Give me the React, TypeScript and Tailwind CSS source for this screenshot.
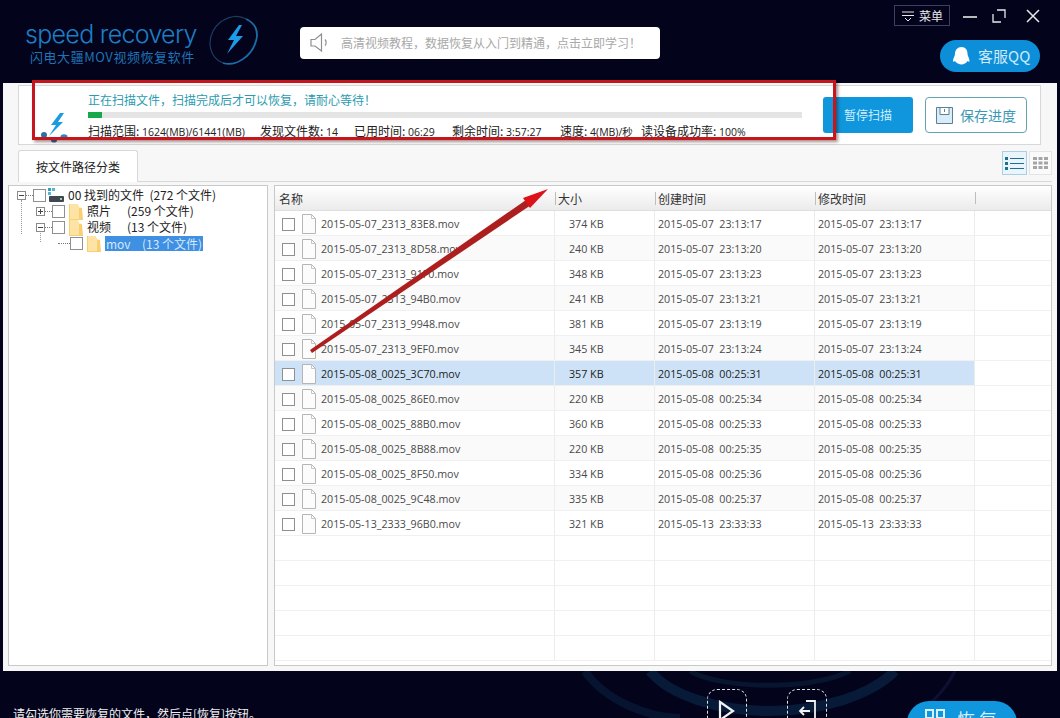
import { ReactNode } from "react"

const cjk = "font-['Noto_Sans_CJK_SC','Noto_Sans',sans-serif]"
const num = "font-['Open_Sans','Noto_Sans_CJK_SC',sans-serif]"

const files = [
  { name: "2015-05-07_2313_83E8.mov", size: "374 KB", time: "2015-05-07  23:13:17", mod: "2015-05-07  23:13:17" },
  { name: "2015-05-07_2313_8D58.mov", size: "240 KB", time: "2015-05-07  23:13:20", mod: "2015-05-07  23:13:20" },
  { name: "2015-05-07_2313_91F0.mov", size: "348 KB", time: "2015-05-07  23:13:23", mod: "2015-05-07  23:13:23" },
  { name: "2015-05-07_2313_94B0.mov", size: "241 KB", time: "2015-05-07  23:13:21", mod: "2015-05-07  23:13:21" },
  { name: "2015-05-07_2313_9948.mov", size: "381 KB", time: "2015-05-07  23:13:19", mod: "2015-05-07  23:13:19" },
  { name: "2015-05-07_2313_9EF0.mov", size: "345 KB", time: "2015-05-07  23:13:24", mod: "2015-05-07  23:13:24" },
  { name: "2015-05-08_0025_3C70.mov", size: "357 KB", time: "2015-05-08  00:25:31", mod: "2015-05-08  00:25:31" },
  { name: "2015-05-08_0025_86E0.mov", size: "220 KB", time: "2015-05-08  00:25:34", mod: "2015-05-08  00:25:34" },
  { name: "2015-05-08_0025_88B0.mov", size: "360 KB", time: "2015-05-08  00:25:33", mod: "2015-05-08  00:25:33" },
  { name: "2015-05-08_0025_8B88.mov", size: "220 KB", time: "2015-05-08  00:25:35", mod: "2015-05-08  00:25:35" },
  { name: "2015-05-08_0025_8F50.mov", size: "334 KB", time: "2015-05-08  00:25:36", mod: "2015-05-08  00:25:36" },
  { name: "2015-05-08_0025_9C48.mov", size: "335 KB", time: "2015-05-08  00:25:37", mod: "2015-05-08  00:25:37" },
  { name: "2015-05-13_2333_96B0.mov", size: "321 KB", time: "2015-05-13  23:33:33", mod: "2015-05-13  23:33:33" },
]

function Check({ className = "" }: { className?: string }) {
  return <span className={"block w-[13px] h-[13px] shrink-0 border border-[#8f8f8f] bg-white " + className} />
}

function Folder() {
  return (
    <svg width="14" height="17" viewBox="0 0 14 17" className="shrink-0">
      <path d="M0 1h8.500l1.500 3.500 3 .5 1 12H0z" fill="#f9cf72" />
      <path d="M8.500 1l1.500 3.500V16H1V1z" fill="#fde3a4" />
    </svg>
  )
}

function FileIcon() {
  return (
    <svg width="14" height="20" viewBox="0 0 14 20" className="shrink-0">
      <path d="M.5.5h9l4 4v15H.5z" fill="#fcfcfc" stroke="#b5b5b5" />
      <path d="M9.500.5v4h4" fill="none" stroke="#c5c5c5" />
    </svg>
  )
}

function Expander({ open }: { open: boolean }) {
  return (
    <span className="relative block w-[9px] h-[9px] shrink-0 border border-[#8a8a8a] bg-white">
      <span className="absolute left-[1px] top-[3px] w-[5px] h-px bg-[#444]" />
      {!open && <span className="absolute left-[3px] top-[1px] w-px h-[5px] bg-[#444]" />}
    </span>
  )
}

function Dots({ className }: { className: string }) {
  return <span className={"block h-px shrink-0 border-t border-dotted border-[#777] " + className} />
}

function TreeRow({ pad, children }: { pad: string; children: ReactNode }) {
  return <div className={"flex items-center h-4 whitespace-pre text-[12px] leading-4 text-[#222] " + pad}>{children}</div>
}

function Tree() {
  return (
    <div className="relative w-[260px] shrink-0 border border-[#c9c9c9] bg-white pt-px self-stretch">
      <span className="absolute left-[12px] top-[14px] h-[34px] border-l border-dotted border-[#999]" />
      <span className="absolute left-[31px] top-[39px] h-[17px] border-l border-dotted border-[#999]" />
      <TreeRow pad="pl-[8px]">
        <Expander open />
        <Dots className="w-[7px]" />
        <Check />
        <svg width="16" height="14" viewBox="0 0 16 14" className="ml-[2px] mr-[4px] shrink-0">
          <rect x="0" y="0" width="3" height="3" fill="#2f9fc4" />
          <rect x="4" y="0" width="3" height="3" fill="#56b4d4" />
          <rect x="0" y="4" width="3" height="3" fill="#56b4d4" />
          <rect x="1" y="8" width="15" height="6" rx="1" fill="#3f4750" />
          <rect x="12" y="10" width="2" height="2" fill="#9fd0a0" />
        </svg>
        <span className={cjk}>00 找到的文件  (272 个文件)</span>
      </TreeRow>
      <TreeRow pad="pl-[27px]">
        <Expander open={false} />
        <Dots className="w-[7px]" />
        <Check />
        <span className="ml-[4px] mr-[4px]"><Folder /></span>
        <span className={"w-10 " + cjk}>照片</span>
        <span className={cjk}>(259 个文件)</span>
      </TreeRow>
      <TreeRow pad="pl-[27px]">
        <Expander open />
        <Dots className="w-[7px]" />
        <Check />
        <span className="ml-[4px] mr-[4px]"><Folder /></span>
        <span className={"w-10 " + cjk}>视频</span>
        <span className={cjk}>(13 个文件)</span>
      </TreeRow>
      <TreeRow pad="pl-[49px]">
        <Dots className="w-[12px]" />
        <Check />
        <span className="ml-[4px] mr-[4px]"><Folder /></span>
        <span className={"flex w-[98px] h-[15px] bg-[#3f8fe2] text-[#d5e8fb] leading-[15px] " + cjk}>
          <span className="w-[37px] pl-px">mov</span>
          <span>(13 个文件)</span>
        </span>
      </TreeRow>
    </div>
  )
}

function Cell({ className, children }: { className: string; children?: ReactNode }) {
  return <div className={"shrink-0 h-full flex items-center pt-[2px] border-r border-[#ececec] " + className}>{children}</div>
}

function FileTable() {
  const blanks = [0, 1, 2, 3, 4]
  return (
    <div className="flex-1 min-w-0 border border-[#c9c9c9] bg-white self-stretch overflow-hidden">
      <div className={"flex h-[25px] text-[12px] text-[#333] bg-gradient-to-b from-white to-[#ebebeb] border-b border-[#dedede] " + cjk}>
        <div className="w-[280px] flex items-center pt-[2px] pl-[4px]">名称</div>
        <div className="w-[100px] flex items-center pt-[2px] pl-[3px] relative before:absolute before:left-0 before:top-[6px] before:h-[13px] before:w-px before:bg-[#bdbdbd]">大小</div>
        <div className="w-[160px] flex items-center pt-[2px] pl-[3px] relative before:absolute before:left-0 before:top-[6px] before:h-[13px] before:w-px before:bg-[#bdbdbd]">创建时间</div>
        <div className="w-[160px] flex items-center pt-[2px] pl-[3px] relative before:absolute before:left-0 before:top-[6px] before:h-[13px] before:w-px before:bg-[#bdbdbd]">修改时间</div>
        <div className="w-px my-[6px] bg-[#bdbdbd]" />
      </div>
      {files.map((f, i) => {
        const selected = f.name.endsWith("3C70.mov")
        return (
          <div key={f.name} className={"flex h-[25px] border-b border-[#f0f0f0] text-[10.7px] whitespace-pre " + num + " " + (selected ? "text-[#222]" : "text-[#4a4a4a]")}>
            <div className={"flex h-full w-[700px] shrink-0 " + (selected ? "bg-[#cde2f7]" : i % 2 ? "bg-[#fafafa]" : "bg-white")}>
              <Cell className="w-[280px] pl-[7px]">
                <Check />
                <span className="ml-[7px] mr-[5px]"><FileIcon /></span>
                {f.name}
              </Cell>
              <Cell className="w-[100px] pl-[14px]">{f.size}</Cell>
              <Cell className="w-[160px] pl-[3px]">{f.time}</Cell>
              <Cell className="w-[160px] pl-[3px]">{f.mod}</Cell>
            </div>
          </div>
        )
      })}
      {blanks.map((b) => (
        <div key={b} className="flex h-[25px] border-b border-[#f0f0f0]">
          <Cell className="w-[280px]" />
          <Cell className="w-[100px]" />
          <Cell className="w-[160px]" />
          <Cell className="w-[160px]" />
        </div>
      ))}
    </div>
  )
}

function Stat({ label, value, className }: { label: string; value: string; className: string }) {
  return (
    <span className={"shrink-0 whitespace-pre " + className}>
      <span className={"text-[12px] " + cjk}>{label}: </span>
      <span className={"text-[10.5px] " + num}>{value}</span>
    </span>
  )
}

function ScanCard() {
  return (
    <div className="flex h-[60px] ml-[15px] mr-[16px] mt-[2px] border border-[#d8d8d8] bg-white">
      <div className="w-[69px] shrink-0 flex items-end justify-center">
        <svg width="34" height="32" viewBox="0 0 34 32" className="ml-[6px] mb-[1px]">
          <path d="M20 2 L11 14 L16 14 L9 25 L23 11 L18 11 L24 2z" fill="#1b9be0" />
          <ellipse cx="4" cy="24" rx="3" ry="3" fill="#2a6fa8" />
          <ellipse cx="14" cy="29" rx="3" ry="2.6" fill="#2a6fa8" />
          <ellipse cx="24" cy="26" rx="3.6" ry="2.8" fill="#2a8ac4" />
        </svg>
      </div>
      <div className="w-[714px] shrink-0 pt-[5px]">
        <div className={"text-[12px] leading-[18px] h-[18px] text-[#2b9bb0] " + cjk}>正在扫描文件，扫描完成后才可以恢复，请耐心等待！</div>
        <div className="h-[6px] mt-[3px] bg-[#e4e4e4]">
          <div className="h-full w-[14px] bg-[#16a94a]" />
        </div>
        <div className="flex items-center h-[18px] mt-[4px] text-[#222] leading-[18px]">
          <Stat label="扫描范围" value="1624(MB)/61441(MB)" className="w-[172px]" />
          <Stat label="发现文件数" value="14" className="w-[94px]" />
          <Stat label="已用时间" value="06:29" className="w-[98px]" />
          <Stat label="剩余时间" value="3:57:27" className="w-[108px]" />
          <Stat label="速度" value="4(MB)/秒" className="w-[81px]" />
          <Stat label="读设备成功率" value="100%" className="w-[120px]" />
        </div>
      </div>
      <button className={"w-[90px] h-9 mt-[11px] ml-[21px] rounded-[3px] bg-[#0f96dc] text-[#cfeeff] text-[12px] " + cjk}>暂停扫描</button>
      <button className={"flex items-center justify-center gap-[7px] w-[102px] h-9 mt-[11px] ml-[12px] rounded-[4px] border border-[#63a3b5] bg-white text-[#3a98b5] text-[14px] " + cjk}>
        <svg width="17" height="17" viewBox="0 0 17 17">
          <path d="M.5.5h16v16H.5z" fill="#d9edf8" stroke="#5d7f95" />
          <path d="M4 .5h9v7H4z" fill="#fff" stroke="#5d7f95" />
          <path d="M8.500 2v3" stroke="#5d7f95" />
        </svg>
        保存进度
      </button>
    </div>
  )
}

export default function App() {
  return (
    <div className="relative w-[1060px] h-[718px] overflow-hidden bg-[#03031c]">
      {/* title bar */}
      <div className="flex h-[83px]">
        <div className="w-[300px] shrink-0 flex pl-[25px] pt-[21px]">
          <div className="w-[181px]">
            <div className="font-['Inter',sans-serif] font-light text-[25px] leading-[27px] tracking-[-0.7px] text-[#1c7fc4] whitespace-nowrap">speed recovery</div>
            <div className={"text-[13px] leading-4 mt-[1px] pl-[5px] tracking-[0.55px] text-[#1f74b4] whitespace-nowrap " + cjk}>闪电大疆MOV视频恢复软件</div>
          </div>
          <svg width="54" height="52" viewBox="0 0 54 52" className="-mt-[7px]">
            <path d="M40 5 C30 -1 14 4 7 17 C1 29 4 44 17 49" fill="none" stroke="#1b3d5e" strokeWidth="1.2" />
            <path d="M17 49 C30 53 46 42 50 27 C53 17 49 9 40 5" fill="none" stroke="#1a6ea8" strokeWidth="1.8" />
            <path d="M33 11 L22 26 L28 26 L21 40 L37 22 L30 22 L36 11z" fill="#1b9be8" />
          </svg>
        </div>
        <div className={"flex items-center w-[360px] h-8 mt-[27px] rounded-[4px] bg-white text-[#a8a8a8] text-[12px] whitespace-nowrap " + cjk}>
          <svg width="24" height="20" viewBox="0 0 24 20" className="ml-[10px] mr-[7px] shrink-0" fill="none" stroke="#8f8f8f">
            <path d="M1 6.500h4L11.500 1v17L5 13H1z" strokeWidth="1.2" />
            <path d="M15 6.500c1.500 1.600 1.500 4.600 0 6.200" strokeWidth="1.2" />
          </svg>
          高清视频教程，数据恢复从入门到精通，点击立即学习！
        </div>
        <div className="flex-1 flex flex-col items-end pt-[5px] pr-[20px]">
          <div className="flex items-center">
            <div className={"flex items-center justify-center gap-[4px] w-[56px] h-[21px] border border-[#3c4060] text-[#e8e8e8] text-[12px] " + cjk}>
              <svg width="14" height="12" viewBox="0 0 14 12" fill="none" stroke="#e8e8e8">
                <path d="M1 2h12M1 5.500h12M4 8l3 3 3-3" />
              </svg>
              菜单
            </div>
            <svg width="14" height="14" viewBox="0 0 14 14" className="ml-[13px]" stroke="#e8e8e8" strokeWidth="1.6">
              <path d="M0 8h14" />
            </svg>
            <svg width="14" height="14" viewBox="0 0 14 14" className="ml-[15px]" fill="none" stroke="#e8e8e8" strokeWidth="1.3">
              <path d="M5 1h8v8M1 5v8h8" />
            </svg>
            <svg width="14" height="14" viewBox="0 0 14 14" className="ml-[20px]" stroke="#e8e8e8" strokeWidth="1.5">
              <path d="M1 1l12 12M13 1L1 13" />
            </svg>
          </div>
          <div className={"flex items-center gap-[7px] pl-[12px] w-[100px] h-8 mt-[14px] rounded-full bg-[#0d8ed8] text-[#cfeaf8] text-[15px] whitespace-nowrap " + cjk}>
            <svg width="19" height="20" viewBox="0 0 19 20" className="shrink-0">
              <path d="M9.500 1c4 0 6 3 6 7 0 2 2 4 2 7 0 1-1 1-2 0-1 2-4 3.500-6 3.500S4 17 3 15c-1 1-2 1-2 0 0-3 2-5 2-7 0-4 2.500-7 6.500-7z" fill="#ffffff" />
            </svg>
            客服QQ
          </div>
        </div>
      </div>

      {/* main panel */}
      <div className="flex flex-col h-[588px] ml-[3px] mr-[3px] bg-[#f7f7f7]">
        <ScanCard />
        <div className="flex h-[32px] mt-[5px] ml-[15px] mr-[5px] border-b border-[#d8d8d8]">
          <div className={"flex items-center justify-center w-[120px] h-[32px] rounded-t-[3px] border border-b-0 border-[#d8d8d8] bg-white text-[#222] text-[12px] " + cjk}>按文件路径分类</div>
          <div className="flex-1" />
          <div className="flex items-center justify-center w-[25px] h-[24px] mt-[1px] border border-[#a9cfe0] bg-[#eaf5fb]">
            <svg width="19" height="13" viewBox="0 0 19 13">
              <path d="M0 0h3v3H0zM0 5h3v3H0zM0 10h3v3H0z" fill="#1f6f8f" />
              <path d="M5 1.500h14M5 6.500h14M5 11.500h14" stroke="#1f6f8f" />
            </svg>
          </div>
          <div className="flex items-center justify-center w-[23px] h-[24px] mt-[1px] ml-[2px] border border-[#e4e4e4] bg-[#fafafa]">
            <svg width="15" height="12" viewBox="0 0 15 12" fill="#a5a5a5">
              <path d="M0 0h4v3H0zM5.500 0h4v3h-4zM11 0h4v3h-4zM0 4.500h4v3H0zM5.500 4.500h4v3h-4zM11 4.500h4v3h-4zM0 9h4v3H0zM5.500 9h4v3h-4zM11 9h4v3h-4z" />
            </svg>
          </div>
        </div>
        <div className="flex gap-[6px] h-[481px] mt-[3px] ml-[5px] mr-[5px]">
          <Tree />
          <FileTable />
        </div>
      </div>

      {/* bottom bar */}
      <div className="relative h-[47px] overflow-hidden">
        <svg width="420" height="47" viewBox="0 0 420 47" className="absolute left-[560px] top-0" fill="none">
          <path d="M25 0 C45 30 90 47 120 47" stroke="#07142f" strokeWidth="8" />
          <path d="M90 0 C110 25 160 40 210 40 C260 40 310 25 335 0" stroke="#071a38" strokeWidth="10" />
          <path d="M130 0 C160 18 250 20 290 0" stroke="#07152f" strokeWidth="5" />
          <path d="M395 0 C385 20 370 35 350 47" stroke="#0d0f33" strokeWidth="3" />
        </svg>
        <div className={"absolute left-[13px] top-[35px] text-[#f0f0f0] text-[12px] leading-4 whitespace-nowrap " + cjk}>请勾选你需要恢复的文件，然后点[恢复]按钮。</div>
        <div className="absolute left-[707px] top-[18px] flex justify-center pt-[10px] w-10 h-[50px] rounded-t-[10px] border border-dashed border-[#e0e0e0]">
          <svg width="18" height="22" viewBox="0 0 18 22" fill="none" stroke="#f2f2f2" strokeWidth="2.200">
            <path d="M2 2l13 9-13 9z" />
          </svg>
        </div>
        <div className="absolute left-[787px] top-[18px] flex justify-center pt-[10px] w-10 h-[50px] rounded-t-[10px] border border-dashed border-[#e0e0e0]">
          <svg width="18" height="22" viewBox="0 0 18 22" fill="none" stroke="#f2f2f2" strokeWidth="1.800">
            <path d="M8 1h9v20H8M12 11H2M6 7l-4 4 4 4" />
          </svg>
        </div>
        <div className={"absolute left-[907px] top-[30px] flex gap-[12px] pl-[18px] pt-[6px] w-[110px] h-[50px] rounded-t-[22px] bg-[#0f96dc] text-[#d8f0ff] text-[18px] leading-6 tracking-[4px] " + cjk}>
          <svg width="20" height="20" viewBox="0 0 20 20" fill="none" stroke="#d8f0ff" strokeWidth="2" className="mt-[2px]">
            <path d="M1 1h7v8H1zM12 1h7v8h-7z" />
          </svg>
          恢复
        </div>
      </div>

      {/* annotation drawn over the screenshot */}
      <div className="absolute left-[32px] top-[80px] w-[804px] h-[60px] border-[3px] border-[#c4161c] shadow-[2px_2px_3px_rgba(60,0,0,0.45)]" />
      <svg width="1060" height="718" className="absolute left-0 top-0 pointer-events-none">
        <path d="M310 350 L526 200 L531 205 L312 353z" fill="#ad1f1f" />
        <path d="M548 189 L523 198 L530 208z" fill="#dc1218" />
      </svg>
    </div>
  )
}
